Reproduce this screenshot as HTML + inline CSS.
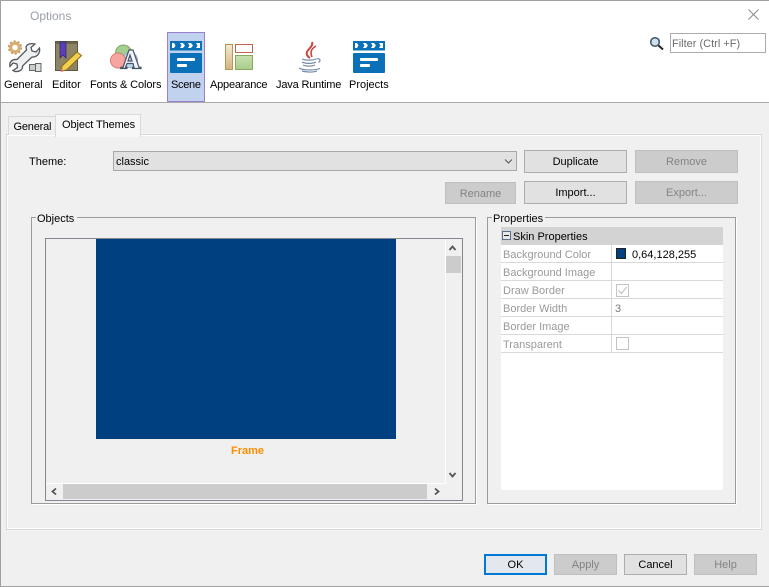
<!DOCTYPE html>
<html><head><meta charset="utf-8"><style>
html,body{margin:0;padding:0;width:769px;height:587px;overflow:hidden;background:#f0f0f0;font-family:"Liberation Sans",sans-serif;font-size:11px;color:#000}
.a{position:absolute;box-sizing:border-box}
.t{position:absolute;white-space:nowrap;line-height:14px}
.b{position:absolute;box-sizing:border-box;background:#e1e1e1;border:1px solid #adadad;text-align:center;font-size:11px;line-height:22px}
.d{background:#ccc;border-color:#bfbfbf;color:#838383}
.l{position:absolute;left:503px;color:#9a9a9a;white-space:nowrap;line-height:14px}
.r{position:absolute;left:501px;width:222px;height:1px;background:#d9d9d9}
</style></head><body>
<div class="a" style="left:0;top:0;width:769px;height:587px;border:1px solid #a0a0a0;border-right:0"></div>
<div class="a" style="left:1px;top:1px;width:768px;height:101px;background:#fff"></div>
<div class="a" style="left:1px;top:102px;width:768px;height:1px;background:#a9a9a9"></div>
<div class="t" style="left:30px;top:9px;font-size:12px;color:#9a9fa6">Options</div>
<svg class="a" style="left:747px;top:8px" width="13" height="13"><path d="M1.500 1.500L11.500 11.500M11.500 1.500L1.500 11.500" stroke="#8a8a8a" stroke-width="1" fill="none"/></svg>

<div class="a" style="left:167px;top:32px;width:38px;height:70px;background:#c1d2ee;border:1px solid #9b80cf"></div>

<!-- General icon -->
<svg class="a" style="left:0;top:36px" width="45" height="38" viewBox="0 0 45 38">
<circle cx="15" cy="11.500" r="4.300" fill="#fff" stroke="#d8ae70" stroke-width="3"/>
<circle cx="15" cy="11.500" r="6.300" fill="none" stroke="#c49a60" stroke-width="1.600" stroke-dasharray="2.200 1.800"/>
<rect x="29.500" y="28.500" width="6" height="6" fill="#c9cccf" stroke="#666" stroke-width="1"/>
<rect x="35.500" y="27.500" width="5.500" height="8" fill="#dcdedf" stroke="#666" stroke-width="1"/>
<path d="M26 11C27 8 31 7 35 8L31 11.500L32 15L36 16L39.500 12C40.500 17 37 21.500 32 21L22.500 30C23 34 19 36 15 35.500L13 34.500L17.500 31.500L17 28L13 27L10 30.500C9 26 12 23 17 23.500L26.500 14Z" fill="#eef0f2" stroke="#55595e" stroke-width="1.300"/>
</svg>
<!-- Editor icon -->
<svg class="a" style="left:54px;top:40px" width="30" height="34" viewBox="0 0 30 34">
<rect x="1.500" y="1.500" width="22" height="29" fill="#8e8465" stroke="#5f5840"/>
<path d="M2 2h21v2H2z" fill="#6d654c"/>
<path d="M6 2h6v16l-3-3-3 3z" fill="#5b3fb8" stroke="#2c2170" stroke-width=".7"/>
<path d="M8 26L23 12l4.500 3.500L12.500 30 7.500 31z" fill="#f3cf4c" stroke="#8a6d1d"/>
<path d="M7 28.500l2.800 2.500-3 1z" fill="#e36a6a"/>
</svg>
<!-- Fonts icon -->
<svg class="a" style="left:108px;top:42px" width="36" height="30" viewBox="0 0 36 30">
<circle cx="15.500" cy="11" r="8" fill="#a5cf8f" stroke="#7fa66c"/>
<circle cx="22" cy="18" r="7.500" fill="#bcd9ee" stroke="#8cb0cc"/>
<circle cx="10" cy="18.500" r="7.500" fill="#f6a5a0" stroke="#d77a73"/>
<path fill-rule="evenodd" d="M12.500 26.500L13 25.300h2L21 8h4L31 25.300h2v1.200h-8.500v-1.200h1.500L25 21.500h-6L17.500 25.300H19v1.200zM20 19h4L22 13z" fill="#f2f4f7" stroke="#46536a" stroke-width="1.200"/>
</svg>
<!-- Scene icon -->
<svg class="a" style="left:170px;top:41px" width="32" height="32" viewBox="0 0 32 32">
<rect width="32" height="9.500" fill="#0a70b8"/><rect y="12" width="32" height="20" fill="#0a70b8" rx="1"/>
<path d="M2 2h2l1.500 2.500L4 7H2zM10 2h3l2 2.500L13 7h-3l1.500-2.500zM18 2h3l2 2.500L21 7h-3l1.500-2.500zM26 2h4v5h-4l1.500-2.500z" fill="#fff"/>
<rect x="7" y="17" width="18" height="3" rx="1" fill="#fff"/><rect x="7" y="23" width="10" height="3" rx="1" fill="#fff"/>
</svg>
<!-- Appearance icon -->
<svg class="a" style="left:224px;top:43px" width="31" height="29">
<defs><linearGradient id="g1" x1="0" y1="0" x2="0" y2="1"><stop offset="0" stop-color="#f4ead6"/><stop offset="1" stop-color="#d4b47e"/></linearGradient><linearGradient id="g2" x1="0" y1="0" x2="0" y2="1"><stop offset="0" stop-color="#c9e2b0"/><stop offset="1" stop-color="#a8cc8a"/></linearGradient></defs>
<rect x="1.500" y="1.500" width="7" height="25" fill="url(#g1)" stroke="#b09a58"/>
<rect x="11.500" y="1.500" width="17" height="8" fill="#fff" stroke="#c8604f"/>
<rect x="11.500" y="12.500" width="17" height="14" fill="url(#g2)" stroke="#8ba862"/>
</svg>
<!-- Java icon -->
<svg class="a" style="left:296px;top:40px" width="28" height="34" viewBox="0 0 28 34">
<g fill="none" stroke="#c8463e">
<path d="M16 2C18 7 9 10 11 15C12 17 14 18 14 18" stroke-width="2"/>
<path d="M20 6C15 9 14 12 16 17" stroke-width="1.600"/></g>
<g fill="none" stroke="#7288a8" stroke-width="1.200">
<path d="M6 19c3 1.500 10 1.500 14 0"/><path d="M6 22c3 1.800 11 1.800 14 0"/><path d="M7 25c3 1.500 9 1.500 12 0"/>
<path d="M20.500 19c3-1 5 1 2 3.500"/><path d="M3 28c4 2.500 16 2.500 21 .5"/><path d="M6 31c5 1.500 12 1.300 15 0"/></g>
</svg>
<!-- Projects icon -->
<svg class="a" style="left:353px;top:41px" width="32" height="32" viewBox="0 0 32 32">
<rect width="32" height="9.500" fill="#0a70b8"/><rect y="12" width="32" height="20" fill="#0a70b8" rx="1"/>
<path d="M2 2h2l1.500 2.500L4 7H2zM10 2h3l2 2.500L13 7h-3l1.500-2.500zM18 2h3l2 2.500L21 7h-3l1.500-2.500zM26 2h4v5h-4l1.500-2.500z" fill="#fff"/>
<rect x="7" y="17" width="18" height="3" rx="1" fill="#fff"/><rect x="7" y="23" width="10" height="3" rx="1" fill="#fff"/>
</svg>

<div class="t" style="left:4px;top:78px;letter-spacing:-.1px">General</div>
<div class="t" style="left:52px;top:78px">Editor</div>
<div class="t" style="left:90px;top:78px;letter-spacing:-.1px">Fonts &amp; Colors</div>
<div class="t" style="left:171px;top:78px;letter-spacing:-.3px">Scene</div>
<div class="t" style="left:210px;top:78px;letter-spacing:-.2px">Appearance</div>
<div class="t" style="left:276px;top:78px;letter-spacing:-.17px">Java Runtime</div>
<div class="t" style="left:349px;top:78px">Projects</div>

<!-- search -->
<svg class="a" style="left:649px;top:36px" width="16" height="15"><circle cx="6" cy="6" r="4.300" fill="#cfe0ee" stroke="#3f5568" stroke-width="1.500"/><path d="M9.500 9.500L14 13.500" stroke="#222" stroke-width="2"/></svg>
<div class="a" style="left:670px;top:33px;width:96px;height:20px;background:#fff;border:1px solid #ababab"></div>
<div class="t" style="left:672px;top:37px;color:#6d6d6d">Filter (Ctrl +F)</div>

<!-- panel -->
<div class="a" style="left:6px;top:134px;width:756px;height:396px;border:1px solid #d9d9d9;background:#f0f0f0"></div>
<div class="a" style="left:7px;top:135px;width:754px;height:394px;border:1px solid #fff"></div>
<!-- tabs -->
<div class="a" style="left:8px;top:116px;width:48px;height:19px;background:#f0f0f0;border:1px solid #d9d9d9;border-bottom:0"></div>
<div class="t" style="left:13.500px;top:120px;letter-spacing:-.2px">General</div>
<div class="a" style="left:55px;top:114px;width:86px;height:23px;background:#f7f7f7;border:1px solid #d9d9d9;border-bottom:0"></div>
<div class="t" style="left:62px;top:118px;letter-spacing:-.1px">Object Themes</div>

<div class="t" style="left:29px;top:155px">Theme:</div>
<div class="a" style="left:113px;top:151px;width:404px;height:20px;background:#e1e1e1;border:1px solid #a8a8a8"></div>
<div class="t" style="left:116px;top:155px">classic</div>
<svg class="a" style="left:504px;top:158px" width="10" height="7"><path d="M1 1.500L4.500 5L8 1.500" stroke="#555" fill="none"/></svg>

<div class="b" style="left:524px;top:150px;width:103px;height:23px">Duplicate</div>
<div class="b d" style="left:635px;top:150px;width:103px;height:23px">Remove</div>
<div class="b d" style="left:445px;top:182px;width:71px;height:22px">Rename</div>
<div class="b" style="left:524px;top:181px;width:103px;height:23px">Import...</div>
<div class="b d" style="left:635px;top:181px;width:103px;height:23px">Export...</div>

<!-- Objects group -->
<div class="a" style="left:31px;top:217px;width:445px;height:287px;border:1px solid #9b9b9b;box-shadow:1px 1px 0 #fff"></div>
<div class="a" style="left:36px;top:212px;width:41px;height:12px;background:#f0f0f0"></div>
<div class="t" style="left:37px;top:212px">Objects</div>
<div class="a" style="left:45px;top:238px;width:418px;height:263px;border:1px solid #828790;background:#f0f0f0"></div>
<div class="a" style="left:96px;top:239px;width:300px;height:200px;background:#004080"></div>
<div class="t" style="left:231px;top:444px;font-weight:bold;color:#ff8c00">Frame</div>
<div class="a" style="left:445px;top:239px;width:1px;height:244px;background:#fff"></div>
<div class="a" style="left:46px;top:483px;width:400px;height:1px;background:#fff"></div>
<div class="a" style="left:446px;top:256px;width:15px;height:17px;background:#ccc"></div>
<div class="a" style="left:63px;top:484px;width:364px;height:15px;background:#ccc"></div>
<svg class="a" style="left:448px;top:244px" width="10" height="8"><path d="M1.500 6L4.500 2.500L7.500 6" stroke="#555" stroke-width="1.800" fill="none"/></svg>
<svg class="a" style="left:448px;top:471px" width="10" height="8"><path d="M1.500 2L4.500 5.500L7.500 2" stroke="#555" stroke-width="1.800" fill="none"/></svg>
<svg class="a" style="left:50px;top:487px" width="8" height="10"><path d="M6 1.500L2.500 4.500L6 7.500" stroke="#555" stroke-width="1.800" fill="none"/></svg>
<svg class="a" style="left:433px;top:487px" width="8" height="10"><path d="M2 1.500L5.500 4.500L2 7.500" stroke="#555" stroke-width="1.800" fill="none"/></svg>

<!-- Properties group -->
<div class="a" style="left:487px;top:217px;width:249px;height:287px;border:1px solid #9b9b9b;box-shadow:1px 1px 0 #fff"></div>
<div class="a" style="left:492px;top:212px;width:53px;height:12px;background:#f0f0f0"></div>
<div class="t" style="left:493px;top:212px">Properties</div>
<div class="a" style="left:501px;top:227px;width:222px;height:263px;background:#fff"></div>
<div class="a" style="left:501px;top:227px;width:222px;height:18px;background:#d3d3d3"></div>
<svg class="a" style="left:502px;top:231px" width="9" height="9"><rect x=".5" y=".5" width="8" height="8" fill="#e8e8e8" stroke="#59708c"/><path d="M2 4.500h5" stroke="#222"/></svg>
<div class="t" style="left:513px;top:230px">Skin Properties</div>
<div class="r" style="top:262px"></div><div class="r" style="top:280px"></div><div class="r" style="top:298px"></div><div class="r" style="top:316px"></div><div class="r" style="top:334px"></div><div class="r" style="top:352px"></div>
<div class="a" style="left:611px;top:245px;width:1px;height:108px;background:#d9d9d9"></div>
<div class="l" style="top:248px">Background Color</div>
<div class="l" style="top:266px">Background Image</div>
<div class="l" style="top:284px">Draw Border</div>
<div class="l" style="top:302px">Border Width</div>
<div class="l" style="top:320px">Border Image</div>
<div class="l" style="top:338px">Transparent</div>
<div class="a" style="left:616px;top:248px;width:10px;height:11px;background:#004080;border:1px solid #222"></div>
<div class="t" style="left:632px;top:248px">0,64,128,255</div>
<div class="t" style="left:615px;top:302px;color:#777">3</div>
<svg class="a" style="left:616px;top:284px" width="13" height="13"><rect x=".5" y=".5" width="12" height="12" fill="#fff" stroke="#c4c4c4"/><path d="M2.500 6.500L5.500 9.500L10.500 3" stroke="#b5b5b5" fill="none"/></svg>
<svg class="a" style="left:616px;top:337px" width="13" height="13"><rect x=".5" y=".5" width="12" height="12" fill="#fff" stroke="#c4c4c4"/></svg>

<!-- footer -->
<div class="b" style="left:484px;top:554px;width:63px;height:21px;background:#e3e7ee;border:2px solid #0078d7;line-height:19px">OK</div>
<div class="b d" style="left:554px;top:554px;width:63px;height:21px;line-height:21px">Apply</div>
<div class="b" style="left:624px;top:554px;width:63px;height:21px;line-height:21px">Cancel</div>
<div class="b d" style="left:694px;top:554px;width:63px;height:21px;line-height:21px">Help</div>
</body></html>
